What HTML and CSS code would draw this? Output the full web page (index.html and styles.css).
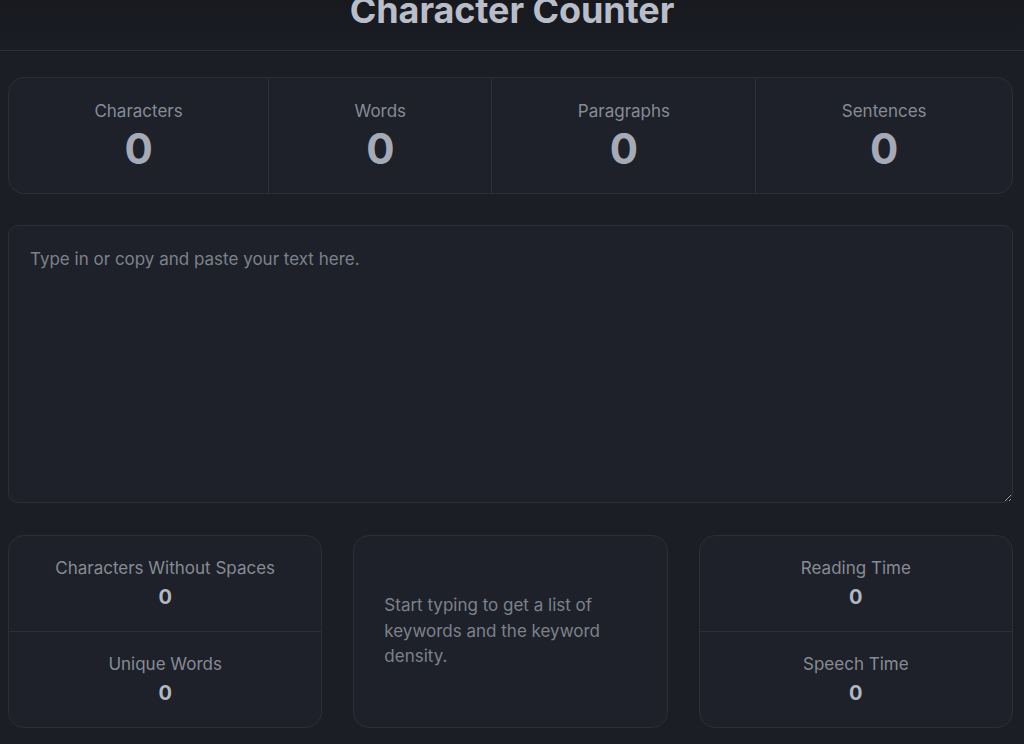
FILE: index.html
```html
<!DOCTYPE html>
<html lang="en">
<head>
<meta charset="utf-8">
<title>Character Counter</title>
<link rel="stylesheet" href="styles.css">
</head>
<body>
<header class="top">
  <h1 class="title">Character Counter</h1>
</header>
<main class="main">
  <section class="stats">
    <div class="stat"><div class="stat-label">Characters</div><div class="stat-value">0</div></div>
    <div class="stat"><div class="stat-label">Words</div><div class="stat-value">0</div></div>
    <div class="stat"><div class="stat-label">Paragraphs</div><div class="stat-value">0</div></div>
    <div class="stat"><div class="stat-label">Sentences</div><div class="stat-value">0</div></div>
  </section>
  <textarea class="input" placeholder="Type in or copy and paste your text here."></textarea>
  <section class="details">
    <div class="card split">
      <div class="item"><div class="item-label">Characters Without Spaces</div><div class="item-value">0</div></div>
      <div class="item"><div class="item-label">Unique Words</div><div class="item-value">0</div></div>
    </div>
    <div class="card keywords">
      <p class="hint">Start typing to get a list of keywords and the keyword density.</p>
    </div>
    <div class="card split">
      <div class="item"><div class="item-label">Reading Time</div><div class="item-value">0</div></div>
      <div class="item"><div class="item-label">Speech Time</div><div class="item-value">0</div></div>
    </div>
  </section>
</main>
</body>
</html>
```
FILE: styles.css
```css
* { box-sizing: border-box; }
html, body { margin: 0; padding: 0; }
body {
  background: #1b1e25;
  font-family: Inter, "Noto Sans", sans-serif;
  color: #a9adb9;
  height: 744px;
  overflow: hidden;
}
.top {
  height: 51px;
  border-bottom: 1px solid #2a2d35;
  background: linear-gradient(#17191e, #1b1e25);
  overflow: hidden;
  text-align: center;
}
.title {
  margin: -7px 0 0;
  font-size: 36px;
  line-height: 34px;
  font-weight: 700;
  color: #b9bdc9;
  letter-spacing: -0.1px;
}
.main {
  padding: 26px 11px 0 8px;
  display: flex;
  flex-direction: column;
}
.stats {
  display: flex;
  height: 117px;
  border: 1px solid #2c2f37;
  border-radius: 16px;
  background: #1e2129;
}
.stat {
  flex: 1 1 auto;
  text-align: center;
  padding-top: 21px;
  border-left: 1px solid #2c2f37;
}
.stat:first-child { border-left: none; }
.stat-label {
  font-size: 17px;
  line-height: 24px;
  color: #878b96;
}
.stat-value {
  font-size: 42px;
  line-height: 32px;
  margin-top: 10px;
  font-weight: 700;
  color: #a6aab6;
}
.input {
  margin-top: 31px;
  height: 278px;
  width: 100%;
  background: #1e2129;
  border: 1px solid #2c2f37;
  border-radius: 10px;
  padding: 21px 21px;
  font-family: Inter, "Noto Sans", sans-serif;
  font-size: 17px;
  line-height: 24px;
  color: #a9adb9;
  resize: vertical;
  outline: none;
}
.input::placeholder { color: #7d818c; }
.details {
  margin-top: 32px;
  display: grid;
  grid-template-columns: repeat(3, 1fr);
  gap: 31px;
}
.card {
  height: 193px;
  border: 1px solid #2c2f37;
  border-radius: 16px;
  background: #1e2129;
}
.split { display: flex; flex-direction: column; }
.item {
  flex: 1;
  text-align: center;
  padding-top: 20px;
}
.item + .item { border-top: 1px solid #2c2f37; }
.item-label {
  font-size: 17px;
  line-height: 24px;
  color: #878b96;
}
.item-value {
  margin-top: 3px;
  font-size: 20px;
  line-height: 28px;
  font-weight: 700;
  color: #b3b7c2;
}
.keywords {
  display: flex;
  align-items: center;
  padding: 0 30px;
}
.hint {
  margin: 0;
  font-size: 17px;
  line-height: 25.5px;
  color: #7d818c;
}
```
